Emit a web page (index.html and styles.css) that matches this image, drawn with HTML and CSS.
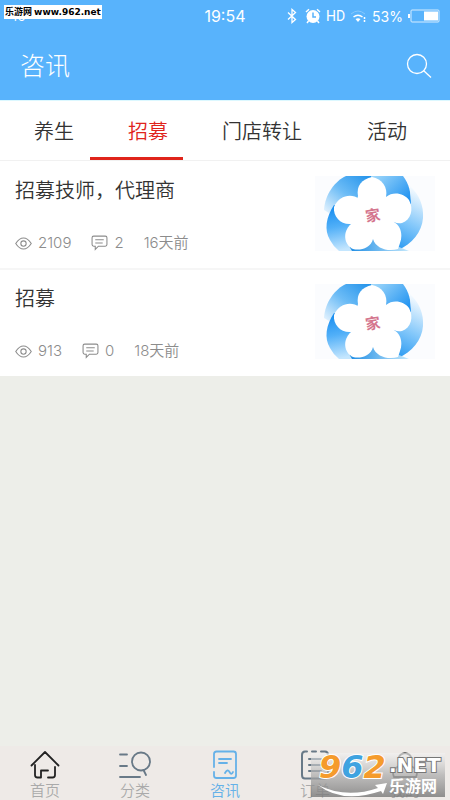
FILE: index.html
```html
<!DOCTYPE html>
<html lang="zh-CN">
<head>
<meta charset="utf-8">
<meta name="viewport" content="width=device-width, initial-scale=1">
<title>咨讯</title>
<link rel="stylesheet" href="styles.css">
</head>
<body>
<svg class="defs" aria-hidden="true">
  <defs>
    <linearGradient id="g1" x1="1" y1="0" x2="0" y2="1"><stop offset="0" stop-color="#1e90ea"/><stop offset=".5" stop-color="#6cbcf6"/><stop offset="1" stop-color="#f4faff"/></linearGradient>
    <linearGradient id="g2" x1="0" y1="0" x2="1" y2="1"><stop offset="0" stop-color="#a4dafb"/><stop offset=".8" stop-color="#1c90f0"/></linearGradient>
    <linearGradient id="g3" x1=".7" y1="0" x2=".3" y2="1"><stop offset="0" stop-color="#f4faff"/><stop offset=".5" stop-color="#84c8fa"/><stop offset="1" stop-color="#1c92f0"/></linearGradient>
    <linearGradient id="g4" x1="0" y1="0" x2="1" y2="0"><stop offset="0" stop-color="#1c8ce4"/><stop offset="1" stop-color="#c4e8fc"/></linearGradient>
    <linearGradient id="g5" x1="0" y1="0" x2=".2" y2="1"><stop offset="0" stop-color="#0f88ee"/><stop offset=".5" stop-color="#52b0f8"/><stop offset="1" stop-color="#c4e6fe"/></linearGradient>
    <symbol id="flower" viewBox="0 0 120 75">
      <rect width="120" height="75" fill="#fbfcfe"/>
      <path d="M9 34C10 18 20 5 31 0H58V40H19Z" fill="url(#g1)"/>
      <path d="M56 0H88C94 8 96 16 96 28L60 40Z" fill="url(#g2)"/>
      <path d="M95 10C104 18 109 30 108 42C107 56 97 68 83 74L60 40L96 28Z" fill="url(#g3)"/>
      <path d="M34 71L58 55L84 71Q89 73 94 75H36Z" fill="url(#g4)"/>
      <path d="M19 29C11 41 9 54 15 64Q18 70 24 75H37L34 70L58 40Z" fill="url(#g5)"/>
      <g fill="#fff">
        <path d="M43 20C41 10 47 3 57 1C67 3 73 11 71 21L58 40Z"/>
        <path d="M71 21C78 15 89 17 94 24C99 33 96 44 87 47Q83 48 79 46L58 40Z"/>
        <path d="M79 46C86 50 88 59 85 67L83 73C74 76 61 73 58 63V40Z"/>
        <path d="M58 63C56 72 45 75 38 73C29 69 27 56 36 48L58 40Z"/>
        <path d="M36 48C26 49 18 41 19 31C24 19 37 17 44 23L58 40Z"/>
        <path d="M43 20L71 21L79 46L58 63L36 48Z"/>
      </g>
      <text x="58" y="45" class="emblem" transform="rotate(-9 58 40)">家</text>
    </symbol>
    <symbol id="eye" viewBox="0 0 16 12"><g fill="none" stroke="#8c8c8c"><path d="M.7 6Q4 .8 8 .8T15.300 6Q12 11.200 8 11.200T.7 6Z"/><circle cx="8" cy="6" r="2.500"/></g></symbol>
    <symbol id="chat" viewBox="0 0 16 15"><g fill="none" stroke="#8c8c8c"><path d="M2.500 1H13.500Q15 1 15 2.500V9Q15 10.500 13.500 10.500H7L4 13.500V10.500H2.500Q1 10.500 1 9V2.500Q1 1 2.500 1Z"/><path d="M4 4.500H12M4 7.500H11"/></g></symbol>
  </defs>
</svg>
<div class="app">
  <header class="header">
    <div class="status">
      <span class="signal">46</span>
      <time class="clock">19:54</time>
      <div class="indicators">
        <svg width="10" height="16" viewBox="0 0 10 16" fill="none" stroke="#fff" stroke-width="1.300"><path d="M1 4.500L8.500 11.500L5 14.500V1.500L8.500 4.500L1 11.500"/></svg>
        <svg class="alarm" width="16" height="16" viewBox="0 0 16 16"><circle cx="8" cy="8.500" r="6.500" fill="#fff"/><path d="M1 4L4 1.300M15 4L12 1.300M3.500 13L2 15M12.500 13L14 15" stroke="#fff" stroke-width="1.500"/><path d="M8 4.500V9H11" fill="none" stroke="#58b3fc" stroke-width="1.500"/></svg>
        <span class="hd">HD</span>
        <svg class="wifi" width="17" height="15" viewBox="0 0 17 15" fill="none"><path d="M1 5Q8 -1 15 5" stroke="#86c8fd"/><path d="M3.500 8Q8 4.500 12.500 8" stroke="#fff" stroke-width="1.500"/><path d="M5.500 10Q8 8.500 10.500 10L8 13Z" fill="#fff"/><path d="M14.500 8V10M14.500 11V13" stroke="#fff" stroke-width="1.500"/></svg>
        <span class="percent">53%</span>
        <svg class="battery" width="32" height="14" viewBox="0 0 32 14"><rect x="3" y="1" width="28" height="12" rx="1" fill="none" stroke="#d5ecff"/><path d="M0 5H2V9H0Z" fill="#fff"/><rect x="16" y="2.500" width="14" height="9" fill="#fff"/></svg>
      </div>
    </div>
    <div class="titlebar">
      <h1>咨讯</h1>
      <button class="search" type="button" aria-label="搜索"><svg width="26" height="26" viewBox="0 0 26 26" fill="none" stroke="#fff" stroke-width="1.300"><circle cx="11" cy="11" r="9.500"/><path d="M17.500 17.500L25 24.500"/></svg></button>
    </div>
  </header>
  <nav class="tabs">
    <a href="#health">养生</a>
    <a href="#recruit" class="active" aria-current="page">招募</a>
    <a href="#transfer">门店转让</a>
    <a href="#events" class="last">活动</a>
  </nav>
  <main class="list">
    <article class="item">
      <div class="body">
        <h2>招募技师，代理商</h2>
        <p class="meta"><span class="stat"><svg width="17" height="13"><use href="#eye"/></svg>2109</span><span class="stat"><svg width="17" height="16"><use href="#chat"/></svg>2</span><time>16天前</time></p>
      </div>
      <svg class="thumb" role="img" aria-label="家"><use href="#flower"/></svg>
    </article>
    <article class="item">
      <div class="body">
        <h2>招募</h2>
        <p class="meta"><span class="stat"><svg width="17" height="13"><use href="#eye"/></svg>913</span><span class="stat"><svg width="17" height="16"><use href="#chat"/></svg>0</span><time>18天前</time></p>
      </div>
      <svg class="thumb" role="img" aria-label="家"><use href="#flower"/></svg>
    </article>
  </main>
  <nav class="bottom">
    <a href="#home"><svg width="30" height="30" viewBox="0 0 30 30" fill="none" stroke="#222" stroke-width="1.800" stroke-linecap="round" stroke-linejoin="round"><path d="M1.500 15.500L15 2L28.500 15.500M5 15V25Q5 27.500 7.500 27.500H11V20.500H18M25 17V25Q25 27.500 22.500 27.500H18"/></svg>首页</a>
    <a href="#category"><svg width="32" height="30" viewBox="0 0 32 30" fill="none" stroke="#687987" stroke-width="1.800" stroke-linecap="round"><path d="M1 4.500H8M1 16H8M1 27H21M24.500 20L27 25"/><circle cx="22" cy="11.500" r="9"/></svg>分类</a>
    <a href="#news" class="current" aria-current="page"><svg width="30" height="30" viewBox="0 0 30 30" fill="none" stroke="#65b1e8" stroke-width="1.800" stroke-linecap="round" stroke-linejoin="round"><path d="M4 17V4Q4 1.500 6.500 1.500H23.500Q26 1.500 26 4V25.500Q26 28 23.500 28H6.500Q4 28 4 25.500V22M9 9H21M9 13H17M15 23Q17.500 18.500 19.500 22T23 22"/></svg>咨讯</a>
    <a href="#orders"><svg width="30" height="30" viewBox="0 0 30 30" fill="none" stroke="#687987" stroke-width="2" stroke-linecap="round"><path d="M7 1.500H5Q2 1.500 2 5V25Q2 28.500 5 28.500H24Q28 28.500 28 25V5Q28 1.500 25 1.500H21M12 1.500H16M9 9H21M9 15H21M9 21H21"/></svg>订单</a>
    <a href="#me"><svg width="30" height="30" viewBox="0 0 30 30" fill="none" stroke="#666" stroke-width="1.800"><path d="M11 15Q8 11 9 7Q10 4 15 3Q20 4 21 7Q22 11 19 15L26 19Q28 22 26 27H4Q2 22 4 19Z"/></svg>我的</a>
  </nav>
  <div class="source">乐游网 <span>www.962.net</span></div>
  <div class="brand">
    <svg width="136" height="60" viewBox="0 -10 136 60" role="img" aria-label="962.NET 乐游网">
      <defs><linearGradient id="shade" x1="0" y1="0" x2="0" y2="1"><stop offset="0" stop-color="#f4f4f4" stop-opacity=".55"/><stop offset=".5" stop-color="#aaa" stop-opacity=".7"/><stop offset="1" stop-color="#777" stop-opacity=".8"/></linearGradient></defs>
      <rect x="1" y="3" width="134" height="44" fill="url(#shade)"/>
      <path d="M8 35Q36 49 68 38L65 35L77 33L73 44L71 41Q32 54 8 35Z" fill="#fff"/>
      <text x="9" y="28" class="num"><tspan class="orange">9</tspan><tspan class="blue">6</tspan><tspan class="orange">2</tspan></text>
      <text x="79" y="22" class="net">.NET</text>
      <text x="79" y="42" class="cn">乐游网</text>
    </svg>
  </div>
</div>
</body>
</html>
```
FILE: styles.css
```css
* {
  box-sizing: border-box;
}

body {
  margin: 0;
  background: #edeee9;
  color: #333;
  font-family: Inter, "Noto Sans CJK SC", sans-serif;
}

a {
  color: inherit;
  text-decoration: none;
}

h1,
h2,
p {
  margin: 0;
  font-weight: 350;
}

svg {
  display: block;
  flex: none;
}

.defs {
  position: absolute;
  width: 0;
  height: 0;
}

.app {
  position: relative;
  display: flex;
  flex-direction: column;
  min-height: 100vh;
}

.header {
  background: #58b3fc;
  color: #fff;
  border-bottom: 1px solid #dcf8ff;
}

.status {
  display: grid;
  grid-template-columns: 1fr auto 1fr;
  align-items: center;
  height: 32px;
  padding: 0 10px;
}

.signal {
  font-size: 12px;
}

.clock {
  font-size: 16px;
}

.indicators {
  display: flex;
  justify-content: flex-end;
  align-items: center;
  gap: 5px;
  font-size: 14px;
}

.alarm {
  margin-left: 3px;
}

.hd {
  font-family: Roboto, sans-serif;
}

.titlebar {
  display: flex;
  justify-content: space-between;
  align-items: center;
  height: 68px;
  padding: 0 18px 0 20px;
}

h1 {
  font-size: 25px;
  font-weight: 300;
  line-height: 36px;
}

.search {
  padding: 0;
  border: 0;
  background: none;
}

.tabs {
  position: relative;
  display: flex;
  gap: 54px;
  padding: 0 43px 0 34px;
  height: 60px;
  background: #fff;
  border-bottom: 1px solid #f1f1f1;
  font-size: 20px;
  font-weight: 350;
  line-height: 62px;
}

.tabs::after {
  content: "";
  position: absolute;
  left: 20%;
  bottom: 0;
  width: 93px;
  height: 3px;
  background: #e0241b;
}

.active {
  color: #e0241b;
}

.last {
  margin-left: auto;
}

.list {
  flex: 1;
}

.item {
  display: flex;
  justify-content: space-between;
  padding: 15px 15px 17px;
  background: #fff;
}

.item + .item {
  padding-top: 14px;
  border-top: 2px solid #f6f6f6;
}

.body {
  display: flex;
  flex-direction: column;
  justify-content: space-between;
}

h2 {
  font-size: 20px;
  line-height: 30px;
}

.meta {
  display: flex;
  gap: 20px;
  color: #8c8c8c;
  font-size: 15px;
  line-height: 16px;
}

.stat {
  display: flex;
  align-items: center;
  gap: 6px;
}

.thumb {
  width: 120px;
  height: 75px;
}

.emblem {
  fill: #d4758e;
  font: bold 15px "Noto Sans CJK SC", sans-serif;
  text-anchor: middle;
}

.bottom {
  display: grid;
  grid-template-columns: repeat(5, 1fr);
  height: 54px;
  padding-top: 4px;
  background: #eeeae7;
  color: #aaa;
  font-size: 15px;
  font-weight: 350;
  line-height: 22px;
}

.bottom a {
  display: flex;
  flex-direction: column;
  align-items: center;
}

.bottom .current {
  color: #65b1e8;
}

.source {
  position: absolute;
  top: 5px;
  left: 4px;
  width: 98px;
  height: 14px;
  background: #fff;
  color: #000;
  font: bold 9px/14px "Noto Sans CJK SC", sans-serif;
  text-align: center;
  white-space: nowrap;
}

.source span {
  font-family: "DejaVu Sans", sans-serif;
}

.brand {
  position: absolute;
  right: 4px;
  bottom: 0;
}

.num {
  font: italic bold 32px "DejaVu Sans", sans-serif;
  stroke: #fff;
  stroke-width: 2px;
  paint-order: stroke;
}

.orange {
  fill: #f59b2c;
}

.blue {
  fill: #3fa3e0;
}

.net {
  fill: #fff;
  stroke: #777;
  stroke-width: 2px;
  paint-order: stroke;
  font: bold 20px "DejaVu Sans", sans-serif;
}

.cn {
  fill: #fff;
  font: bold 16px "Noto Sans CJK SC", sans-serif;
}
```
